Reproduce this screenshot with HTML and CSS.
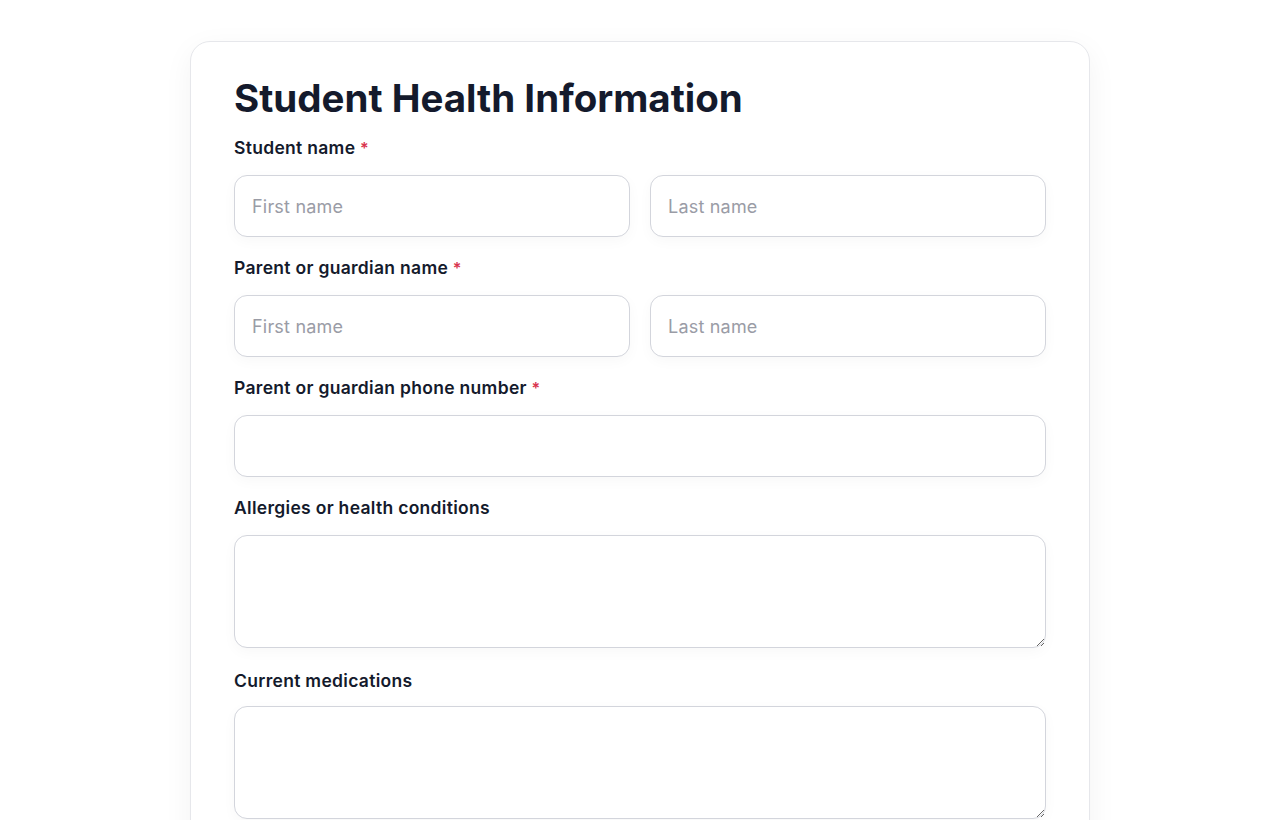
FILE: index.html
```html
<!DOCTYPE html>
<html lang="en">
<head>
<meta charset="utf-8">
<title>Student Health Information</title>
<link rel="stylesheet" href="styles.css">
</head>
<body>
<main class="card">
  <h1 class="title">Student Health Information</h1>
  <div class="field">
    <label class="label">Student name <span class="req">*</span></label>
    <div class="row">
      <input class="input" type="text" placeholder="First name">
      <input class="input" type="text" placeholder="Last name">
    </div>
  </div>
  <div class="field">
    <label class="label">Parent or guardian name <span class="req">*</span></label>
    <div class="row">
      <input class="input" type="text" placeholder="First name">
      <input class="input" type="text" placeholder="Last name">
    </div>
  </div>
  <div class="field">
    <label class="label">Parent or guardian phone number <span class="req">*</span></label>
    <input class="input" type="tel">
  </div>
  <div class="field">
    <label class="label">Allergies or health conditions</label>
    <textarea class="input area"></textarea>
  </div>
  <div class="field field-last">
    <label class="label">Current medications</label>
    <textarea class="input area"></textarea>
  </div>
</main>
</body>
</html>
```
FILE: styles.css
```css
* { box-sizing: border-box; }
html, body { margin: 0; padding: 0; background: #ffffff; }
body {
  font-family: Inter, "Noto Sans", sans-serif;
  color: #141a2c;
  padding-top: 41px;
}
.card {
  width: 900px;
  margin: 0 auto;
  border: 1px solid #e6e7eb;
  border-radius: 20px;
  background: #fff;
  padding: 33px 43px 40px;
  box-shadow: 0 8px 30px rgba(15, 23, 42, 0.05);
  display: flex;
  flex-direction: column;
  gap: 19px;
}
.title {
  margin: 0 0 -4px;
  font-size: 38.5px;
  line-height: 46px;
  font-weight: 700;
  letter-spacing: 0;
  color: #141a2c;
}
.field {
  display: flex;
  flex-direction: column;
  gap: 15px;
}
.field-last { gap: 13px; margin-top: 2px; }
.label {
  font-size: 17.5px;
  line-height: 24px;
  font-weight: 600;
  letter-spacing: 0.3px;
  color: #141a2c;
}
.req { color: #d9364f; font-size: 16px; }
.row {
  display: grid;
  grid-template-columns: 1fr 1fr;
  gap: 20px;
}
.input {
  display: block;
  width: 100%;
  height: 62px;
  border: 1px solid #d3d5dc;
  border-radius: 13px;
  padding: 0 17px;
  font-family: inherit;
  font-size: 18px;
  letter-spacing: 0.2px;
  color: #141a2c;
  background: #fff;
  box-shadow: 0 4px 14px rgba(15, 23, 42, 0.03);
  outline: none;
}
.input::placeholder { color: #9a9ca6; }
.area {
  height: 113px;
  padding: 14px 17px;
  resize: vertical;
}
```
